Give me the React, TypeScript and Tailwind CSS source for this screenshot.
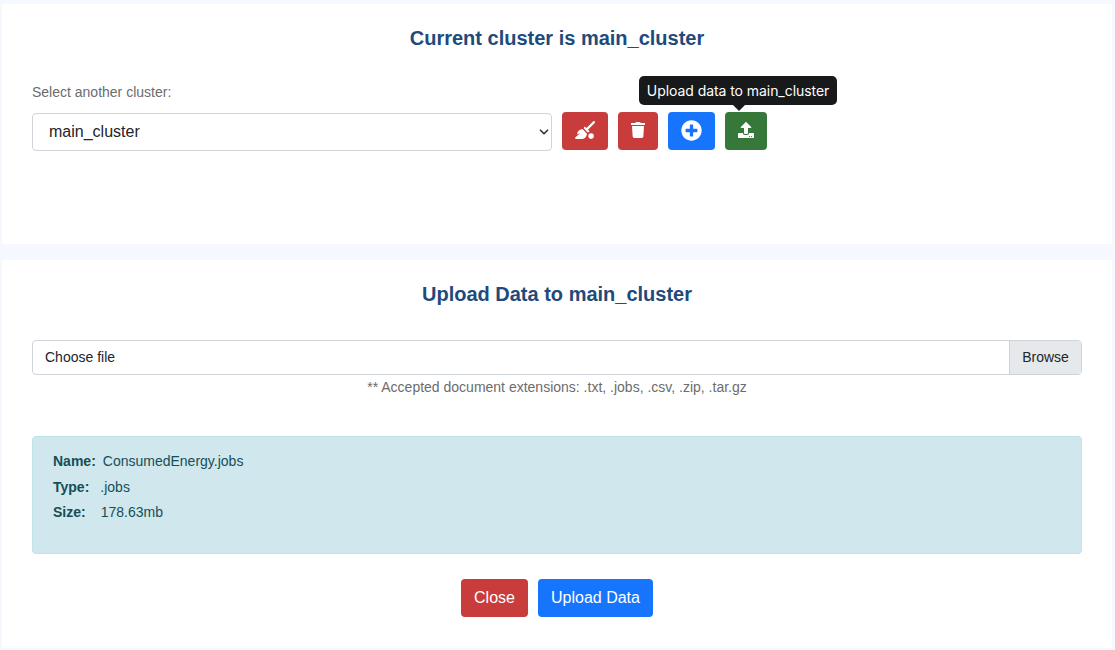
import { FaPlusCircle, FaTrash, FaUpload } from "react-icons/fa";
import { FaBroomBall } from "react-icons/fa6";
import { ChevronDown } from "lucide-react";

function IconButton({
  className,
  children,
}: {
  className: string;
  children: React.ReactNode;
}) {
  return (
    <button
      type="button"
      className={`flex h-[38px] items-center justify-center rounded-[4px] pb-[2px] text-white ${className}`}
    >
      {children}
    </button>
  );
}

function InfoRow({ label, value, gap }: { label: string; value: string; gap: string }) {
  return (
    <p className="flex h-[25.5px] items-center text-[14px] leading-none text-[#164e57]">
      <strong className={`font-bold ${gap}`}>{label}</strong>
      <span>{value}</span>
    </p>
  );
}

export default function App() {
  return (
    <div className="flex h-[650px] w-[1115px] flex-col gap-4 overflow-hidden bg-[#f5f9ff] pt-1 pr-[3px] pl-[2px] font-['Liberation_Sans',Arial,sans-serif]">
      <section className="h-[240px] shrink-0 bg-white px-[30px] pt-[22px]">
        <h2 className="text-center text-[20px] leading-[24px] font-bold text-[#214a7b]">
          Current cluster is main_cluster
        </h2>
        <label className="mt-[34px] block text-[14px] leading-[16px] text-[#6c6c6c]">
          Select another cluster:
        </label>
        <div className="mt-[13px] flex items-start">
          <div className="relative w-[520px]">
            <select className="h-[38px] w-full appearance-none rounded-[4px] border border-[#ced4da] bg-white pl-4 text-[16px] text-[#212529]">
              <option>main_cluster</option>
            </select>
            <ChevronDown
              className="pointer-events-none absolute top-[12px] right-[1px] h-[14px] w-[14px] text-[#343a40]"
              strokeWidth={3}
            />
          </div>
          <IconButton className="-mt-px ml-[10px] w-[46px] bg-[#c93c3c]">
            <FaBroomBall size={20} />
          </IconButton>
          <IconButton className="-mt-px ml-[10px] w-[40px] bg-[#c93c3c]">
            <FaTrash size={16} />
          </IconButton>
          <IconButton className="-mt-px ml-[10px] w-[47px] bg-[#1674fd]">
            <FaPlusCircle size={21} />
          </IconButton>
          <div className="relative -mt-px ml-[10px]">
            <IconButton className="w-[42px] bg-[#36783a]">
              <FaUpload size={16} />
            </IconButton>
            <div className="absolute top-[-36px] left-[-86px] flex h-[29px] w-[198px] items-center justify-center rounded-[5px] bg-[#18191a] font-['Inter',sans-serif] text-[14px] tracking-[-0.06px] text-white">
              Upload data to main_cluster
            </div>
            <div className="absolute top-[-7px] left-[8px] h-0 w-0 border-x-[6px] border-t-[6px] border-x-transparent border-t-[#18191a]" />
          </div>
        </div>
      </section>

      <section className="h-[388px] shrink-0 bg-white px-[30px] pt-[22px]">
        <h2 className="text-center text-[20px] leading-[24px] font-bold text-[#214a7b]">
          Upload Data to main_cluster
        </h2>
        <div className="mt-[34px] flex h-[35px] rounded-[4px] border border-[#ced4da] text-[14px] text-[#212529]">
          <span className="flex flex-1 items-center pl-3">Choose file</span>
          <span className="flex w-[72px] items-center justify-center border-l border-[#ced4da] bg-[#e6e9ec]">
            Browse
          </span>
        </div>
        <p className="mt-[4px] text-center text-[14px] leading-[16px] text-[#6c6c6c]">
          ** Accepted document extensions: .txt, .jobs, .csv, .zip, .tar.gz
        </p>
        <div className="mt-[41px] h-[118px] rounded-[4px] border border-[#bee3ea] bg-[#cfe7ed] pt-[11.5px] pl-5">
          <InfoRow label="Name:" value="ConsumedEnergy.jobs" gap="mr-[7px]" />
          <InfoRow label="Type:" value=".jobs" gap="mr-[11px]" />
          <InfoRow label="Size:" value="178.63mb" gap="mr-[15px]" />
        </div>
        <div className="mt-[25px] flex justify-center gap-[10px]">
          <button type="button" className="h-[38px] w-[67px] rounded-[4px] bg-[#c93c3c] text-[16px] text-white">
            Close
          </button>
          <button type="button" className="h-[38px] w-[115px] rounded-[4px] bg-[#1674fd] text-[16px] text-white">
            Upload Data
          </button>
        </div>
      </section>
    </div>
  );
}
